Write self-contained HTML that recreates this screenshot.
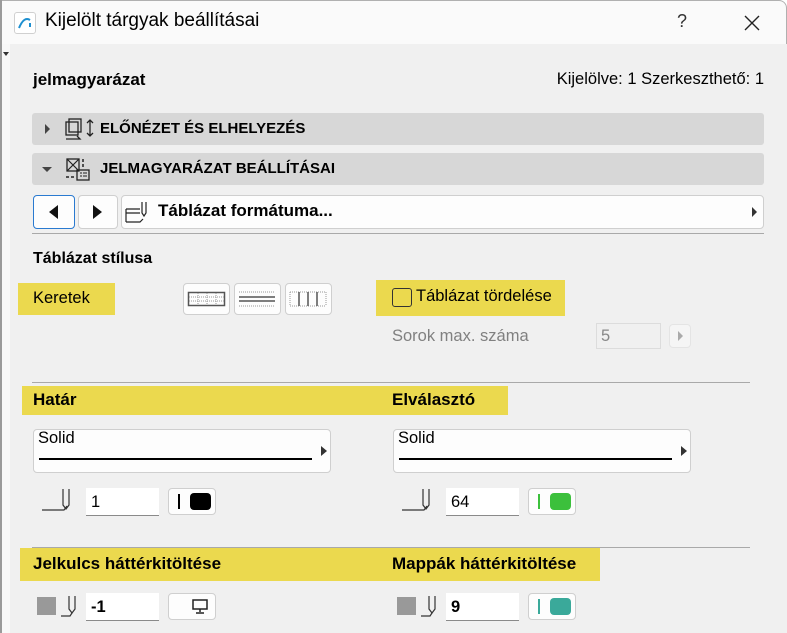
<!DOCTYPE html>
<html><head><meta charset="utf-8"><style>
*{box-sizing:border-box;margin:0;padding:0}
body{width:787px;height:633px;overflow:hidden;background:#fff;font-family:"Segoe UI","Liberation Sans",sans-serif;color:#000;position:relative}
.a{position:absolute}
.b{font-weight:bold}
.bar{position:absolute;left:32px;width:732px;height:32px;background:#d7d7d7;border-radius:3px}
.bar span{position:absolute;left:68px;top:7px;font-weight:bold;font-size:15px}
.btn{position:absolute;background:#fdfdfd;border:1px solid #cfcfcf;border-radius:4px}
.yel{position:absolute;background:#ebd94e}
.line{position:absolute;height:1px;background:#a9a9a9}
.inp{position:absolute;background:#fff;border-bottom:1px solid #8a8a8a;font-size:16.5px;padding-left:5px;line-height:28px}
</style></head><body>
<div class="a" style="left:0;top:0;width:787px;height:44px;background:#fafafa;border-top:1px solid #b0b0b0;border-right:1px solid #b0b0b0;border-top-right-radius:8px"></div>
<div class="a" style="left:14px;top:12px;width:22px;height:22px;border:1px solid #d0d0d0;border-radius:3px;background:#fff"></div>
<svg class="a" style="left:14px;top:12px" width="22" height="22"><path d="M5 16 Q10 4 16 8" stroke="#1d8fd0" stroke-width="2" fill="none"/><rect x="15" y="11" width="2" height="4" fill="#1d8fd0"/></svg>
<div class="a" style="left:45px;top:10px;font-size:19px">Kijelölt tárgyak beállításai</div>
<div class="a" style="left:677px;top:11px;font-size:18px;color:#333">?</div>
<svg class="a" style="left:743px;top:14px" width="18" height="18"><path d="M2 2L16 16M16 2L2 16" stroke="#222" stroke-width="1.4"/></svg>
<div class="a" style="left:0;top:44px;width:787px;height:589px;background:#f0f0f0"></div>
<div class="a" style="left:0;top:0;width:2px;height:633px;background:#9a9a9a"></div>
<div class="a" style="left:2px;top:44px;width:8px;height:589px;background:#f8f8f8"></div>
<div class="a" style="left:3px;top:52px;border-left:3px solid transparent;border-right:3px solid transparent;border-top:4px solid #333"></div>

<div class="a b" style="left:33px;top:70px;font-size:17px">jelmagyarázat</div>
<div class="a" style="right:23px;top:70px;font-size:16.5px">Kijelölve: 1 Szerkeszthető: 1</div>

<div class="bar" style="top:113px"><span>ELŐNÉZET ÉS ELHELYEZÉS</span>
<div class="a" style="left:13px;top:11px;border-top:5px solid transparent;border-bottom:5px solid transparent;border-left:5px solid #444"></div>
<svg class="a" style="left:32px;top:3px" width="34" height="26"><rect x="5" y="3" width="12" height="13" fill="none" stroke="#222" stroke-width="1.3"/><rect x="2" y="6" width="12" height="13" fill="none" stroke="#222" stroke-width="1.3"/><path d="M2 23h14l-3-3" fill="none" stroke="#222" stroke-width="1.3"/><path d="M26 4v16M23 7l3-3 3 3M23 17l3 3 3-3" fill="none" stroke="#222" stroke-width="1.3"/></svg>
</div>
<div class="bar" style="top:153px"><span>JELMAGYARÁZAT BEÁLLÍTÁSAI</span>
<div class="a" style="left:10px;top:14px;border-left:5px solid transparent;border-right:5px solid transparent;border-top:5px solid #444"></div>
<svg class="a" style="left:32px;top:3px" width="34" height="26"><rect x="3" y="3" width="12" height="12" fill="none" stroke="#222" stroke-width="1.3"/><path d="M3 3l12 12M15 3L3 15" stroke="#222" stroke-width="1.2"/><rect x="13" y="14" width="12" height="10" fill="none" stroke="#222" stroke-width="1.3"/><path d="M16 17h2M19 17h4M16 20h2M19 20h4" stroke="#222"/><path d="M19 3v3M19 8v3M2 21h3M7 21h3" stroke="#222" stroke-width="1.5"/></svg>
</div>

<div class="btn" style="left:33px;top:195px;width:42px;height:34px;border:1px solid #2a7ad0"></div>
<div class="a" style="left:49px;top:205px;border-top:7px solid transparent;border-bottom:7px solid transparent;border-right:9px solid #111"></div>
<div class="btn" style="left:78px;top:195px;width:40px;height:34px"></div>
<div class="a" style="left:93px;top:205px;border-top:7px solid transparent;border-bottom:7px solid transparent;border-left:9px solid #111"></div>
<div class="btn" style="left:121px;top:195px;width:643px;height:34px"></div>
<svg class="a" style="left:124px;top:197px" width="30" height="30"><path d="M2 12h14M2 16h14M2 25h14l3-3M2 12v13" fill="none" stroke="#222" stroke-width="1.2"/><path d="M18 5v11l2 3 2-3V5" fill="none" stroke="#222" stroke-width="1.2"/></svg>
<div class="a b" style="left:158px;top:201px;font-size:17px">Táblázat formátuma...</div>
<div class="a" style="left:752px;top:207px;border-top:5px solid transparent;border-bottom:5px solid transparent;border-left:5px solid #333"></div>
<div class="line" style="left:32px;top:233px;width:732px"></div>

<div class="a b" style="left:33px;top:250px;font-size:16px">Táblázat stílusa</div>
<div class="yel" style="left:18px;top:283px;width:97px;height:32px"></div>
<div class="a" style="left:33px;top:289px;font-size:16.5px">Keretek</div>
<div class="btn" style="left:183px;top:283px;width:47px;height:32px"></div>
<div class="btn" style="left:234px;top:283px;width:47px;height:32px"></div>
<div class="btn" style="left:285px;top:283px;width:47px;height:32px"></div>
<svg class="a" style="left:183px;top:283px" width="150" height="32"><rect x="5.5" y="9.5" width="36" height="13" fill="none" stroke="#555" stroke-width="1.5"/><path d="M6 14h35M6 18h35M15 10v12M24 10v12M33 10v12" stroke="#999" stroke-dasharray="1 1"/>
<path d="M56 9h36M56 23h36" stroke="#999" stroke-dasharray="1 1"/><path d="M56 14h36M56 18h36" stroke="#555" stroke-width="1.5"/>
<path d="M107 9h36M107 23h36M107 9v14M143 9v14" stroke="#999" stroke-dasharray="1 1"/><path d="M116 9v14M125 9v14M134 9v14" stroke="#555" stroke-width="1.5"/></svg>
<div class="yel" style="left:376px;top:280px;width:189px;height:36px"></div>
<div class="a" style="left:392px;top:288px;width:20px;height:19px;border:1px solid #333;border-radius:3px"></div>
<div class="a" style="left:416px;top:287px;font-size:16.5px">Táblázat tördelése</div>
<div class="a" style="left:392px;top:327px;font-size:16.5px;color:#808080">Sorok max. száma</div>
<div class="a" style="left:596px;top:323px;width:65px;height:26px;border:1px solid #dcdcdc;background:#f0f0f0;color:#888;font-size:16.5px;padding-left:4px;line-height:24px">5</div>
<div class="btn" style="left:669px;top:324px;width:22px;height:24px;border-color:#e4e4e4;background:#f5f5f5"></div>
<div class="a" style="left:678px;top:331px;border-top:5px solid transparent;border-bottom:5px solid transparent;border-left:5px solid #aaa"></div>

<div class="line" style="left:32px;top:382px;width:718px"></div>
<div class="yel" style="left:22px;top:386px;width:486px;height:29px"></div>
<div class="a b" style="left:33px;top:390px;font-size:17px">Határ</div>
<div class="a b" style="left:392px;top:390px;font-size:17px">Elválasztó</div>

<div class="btn" style="left:33px;top:429px;width:298px;height:44px"></div>
<div class="a" style="left:38px;top:429px;font-size:16.5px">Solid</div>
<div class="a" style="left:39px;top:458px;width:273px;height:1.5px;background:#000"></div>
<div class="a" style="left:321px;top:446px;border-top:5px solid transparent;border-bottom:5px solid transparent;border-left:6px solid #333"></div>
<div class="btn" style="left:393px;top:429px;width:298px;height:44px"></div>
<div class="a" style="left:398px;top:429px;font-size:16.5px">Solid</div>
<div class="a" style="left:399px;top:458px;width:273px;height:1.5px;background:#000"></div>
<div class="a" style="left:681px;top:446px;border-top:5px solid transparent;border-bottom:5px solid transparent;border-left:6px solid #333"></div>

<svg class="a" style="left:40px;top:487px" width="34" height="26"><path d="M2 23h22l3-4" fill="none" stroke="#333" stroke-width="1.2"/><path d="M23 2v16l3 4 3-4V2" fill="none" stroke="#333" stroke-width="1.2"/></svg>
<div class="inp" style="left:86px;top:488px;width:73px;height:28px">1</div>
<div class="btn" style="left:168px;top:488px;width:48px;height:27px"></div>
<div class="a" style="left:178px;top:494px;width:2px;height:15px;background:#000"></div>
<div class="a" style="left:190px;top:493px;width:21px;height:17px;background:#000;border-radius:4px"></div>

<svg class="a" style="left:400px;top:487px" width="34" height="26"><path d="M2 23h22l3-4" fill="none" stroke="#333" stroke-width="1.2"/><path d="M23 2v16l3 4 3-4V2" fill="none" stroke="#333" stroke-width="1.2"/></svg>
<div class="inp" style="left:446px;top:488px;width:73px;height:28px">64</div>
<div class="btn" style="left:528px;top:488px;width:48px;height:27px"></div>
<div class="a" style="left:538px;top:494px;width:2px;height:15px;background:#3cc03c"></div>
<div class="a" style="left:550px;top:493px;width:21px;height:17px;background:#3cc03c;border-radius:4px"></div>

<div class="line" style="left:32px;top:547px;width:718px"></div>
<div class="yel" style="left:20px;top:548px;width:580px;height:33px"></div>
<div class="a b" style="left:33px;top:554px;font-size:17px">Jelkulcs háttérkitöltése</div>
<div class="a b" style="left:392px;top:554px;font-size:17px">Mappák háttérkitöltése</div>

<div class="a" style="left:37px;top:597px;width:19px;height:18px;background:#999"></div>
<svg class="a" style="left:60px;top:594px" width="22" height="24"><path d="M1 22h9l2-3" fill="none" stroke="#333" stroke-width="1.2"/><path d="M9 2v13l3 4 3-4V2" fill="none" stroke="#333" stroke-width="1.2"/></svg>
<div class="inp b" style="left:86px;top:593px;width:73px;height:28px">-1</div>
<div class="btn" style="left:168px;top:593px;width:48px;height:27px"></div>
<svg class="a" style="left:192px;top:599px" width="18" height="16"><rect x="1" y="1" width="14" height="9" fill="none" stroke="#222" stroke-width="1.5"/><path d="M8 10v3M4 14h8" stroke="#222" stroke-width="1.5"/></svg>

<div class="a" style="left:397px;top:597px;width:19px;height:18px;background:#999"></div>
<svg class="a" style="left:420px;top:594px" width="22" height="24"><path d="M1 22h9l2-3" fill="none" stroke="#333" stroke-width="1.2"/><path d="M9 2v13l3 4 3-4V2" fill="none" stroke="#333" stroke-width="1.2"/></svg>
<div class="inp b" style="left:446px;top:593px;width:73px;height:28px">9</div>
<div class="btn" style="left:528px;top:593px;width:48px;height:27px"></div>
<div class="a" style="left:538px;top:599px;width:2px;height:15px;background:#3aa99a"></div>
<div class="a" style="left:550px;top:598px;width:21px;height:17px;background:#3aa99a;border-radius:4px"></div>
</body></html>
